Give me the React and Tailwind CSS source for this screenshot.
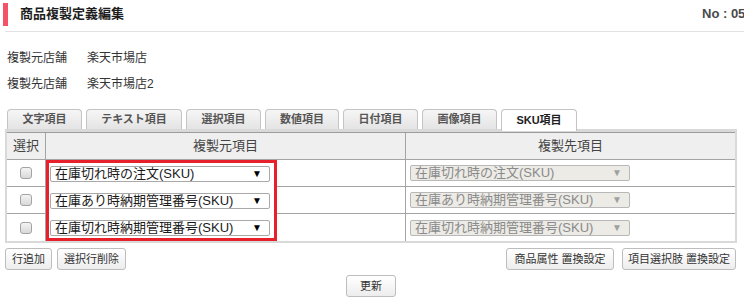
const tabs = ["文字項目", "テキスト項目", "選択項目", "数値項目", "日付項目", "画像項目", "SKU項目"];
const tabWidths = ["w-[75px]", "w-[96px]", "w-[75px]", "w-[74px]", "w-[75px]", "w-[75px]", "w-[76px]"];

const rows = [
  "在庫切れ時の注文(SKU)",
  "在庫あり時納期管理番号(SKU)",
  "在庫切れ時納期管理番号(SKU)",
];

function Checkbox() {
  return (
    <span className="block h-[12px] w-[12px] rounded-[3px] border border-[#a3a3a3] bg-gradient-to-b from-[#f4f4f4] to-[#d9d9d9]" />
  );
}

function FakeSelect({ label, disabled }) {
  return (
    <div
      className={
        "flex h-[16px] w-[220px] items-center justify-between rounded-[2px] border pl-[4px] pr-[7px] " +
        (disabled
          ? "border-[#b8b8b8] bg-[#ecebe6] text-[#8a8a8a]"
          : "border-[#a9a9a9] bg-white text-[#1a1a1a]")
      }
    >
      <span className="whitespace-nowrap text-[13px] leading-[14px]">{label}</span>
      <span className={"text-[10px] leading-none " + (disabled ? "text-[#a0a0a0]" : "text-black")}>▼</span>
    </div>
  );
}

function Btn({ children, w }) {
  return (
    <button
      className={
        "flex h-[22px] items-center justify-center rounded-[3px] border border-[#bdbdbd] bg-gradient-to-b from-white to-[#ededed] text-[11px] text-[#333] " +
        w
      }
    >
      {children}
    </button>
  );
}

export default function App() {
  return (
    <div className="h-[301px] w-[744px] overflow-hidden bg-white font-['Liberation_Sans','Noto_Sans_CJK_JP',sans-serif] text-[#333]">
      {/* header */}
      <div className="ml-[5px] flex h-[32px] items-start border-b border-[#e2e2e2]">
        <span className="-ml-[2px] mt-[3px] h-[23px] w-[5px] bg-[#f5526a]" />
        <span className="ml-[12px] mt-[3px] flex-1 text-[13px] font-bold leading-[22px] text-[#1e1e1e]">
          商品複製定義編集
        </span>
        <span className="mt-[3px] w-[42px] overflow-hidden whitespace-nowrap text-[13px] font-bold leading-[22px] text-[#4a4a4a]">
          No : 05
        </span>
      </div>

      {/* store info */}
      <div className="ml-[7px] mt-[18px] flex flex-col gap-[10px] text-[12px] leading-[16px] text-[#333]">
        <div className="flex">
          <span className="w-[80px]">複製元店舗</span>
          <span>楽天市場店</span>
        </div>
        <div className="flex">
          <span className="w-[80px]">複製先店舗</span>
          <span>楽天市場店2</span>
        </div>
      </div>

      {/* tabs */}
      <div className="relative z-10 ml-[7px] mt-[17px] flex h-[20px] items-end gap-[4px]">
        {tabs.map((t, i) => {
          const active = i === tabs.length - 1;
          return (
            <div
              key={t}
              className={
                "flex items-center justify-center rounded-t-[4px] border border-b-0 text-[11px] font-bold " +
                tabWidths[i] +
                (active
                  ? " -mb-[2px] h-[22px] border-[#c4c4c4] bg-white text-[#1e1e1e]"
                  : " h-[20px] border-[#c4c4c4] bg-gradient-to-b from-[#f6f6f6] to-[#e4e4e4] text-[#555]")
              }
            >
              {t}
            </div>
          );
        })}
      </div>

      {/* table panel */}
      <div className="ml-[5px] w-[732px] border-x-2 border-b-2 border-t-[3px] border-[#d9d9d9]">
        <div className="grid grid-cols-[39px_231px_129px_1fr] border-t border-[#9c9c9c] text-[13px]">
          {/* header */}
          <div className="flex h-[27px] items-center justify-center border-b border-r border-[#a4a4a4] bg-[#efefef] text-[#444]">
            選択
          </div>
          <div className="col-span-2 flex h-[27px] items-center justify-center border-b border-r border-[#a4a4a4] bg-[#efefef] text-[#444]">
            複製元項目
          </div>
          <div className="flex h-[27px] items-center justify-center border-b border-[#a4a4a4] bg-[#efefef] text-[#444]">
            複製先項目
          </div>

          {/* row 1 with highlighted source column */}
          <div className="flex h-[27px] items-center justify-center border-b border-r border-[#a4a4a4]">
            <Checkbox />
          </div>
          <div className="row-span-3 flex flex-col gap-[11px] border-[3px] border-[#e8202a] pl-[1px] pt-[3px]">
            {rows.map((r) => (
              <FakeSelect key={r} label={r} />
            ))}
          </div>
          <div className="h-[27px] border-b border-r border-[#a4a4a4]" />
          <div className="flex h-[27px] items-center border-b border-[#a4a4a4] pl-[4px]">
            <FakeSelect label={rows[0]} disabled />
          </div>

          <div className="flex h-[27px] items-center justify-center border-b border-r border-[#a4a4a4]">
            <Checkbox />
          </div>
          <div className="h-[27px] border-b border-r border-[#a4a4a4]" />
          <div className="flex h-[27px] items-center border-b border-[#a4a4a4] pl-[4px]">
            <FakeSelect label={rows[1]} disabled />
          </div>

          <div className="flex h-[27px] items-center justify-center border-r border-[#a4a4a4]">
            <Checkbox />
          </div>
          <div className="h-[27px] border-r border-[#a4a4a4]" />
          <div className="flex h-[27px] items-center pl-[4px]">
            <FakeSelect label={rows[2]} disabled />
          </div>
        </div>
      </div>

      {/* action buttons */}
      <div className="ml-[5px] mt-[5px] flex w-[731px] items-center">
        <div className="flex gap-[5px]">
          <Btn w="w-[47px]">行追加</Btn>
          <Btn w="w-[69px]">選択行削除</Btn>
        </div>
        <div className="ml-auto flex gap-[8px]">
          <Btn w="w-[108px]">商品属性 置換設定</Btn>
          <Btn w="w-[114px]">項目選択肢 置換設定</Btn>
        </div>
      </div>

      <div className="mt-[5px] flex justify-center pr-[2px]">
        <Btn w="w-[50px] h-[21px]">更新</Btn>
      </div>
    </div>
  );
}
